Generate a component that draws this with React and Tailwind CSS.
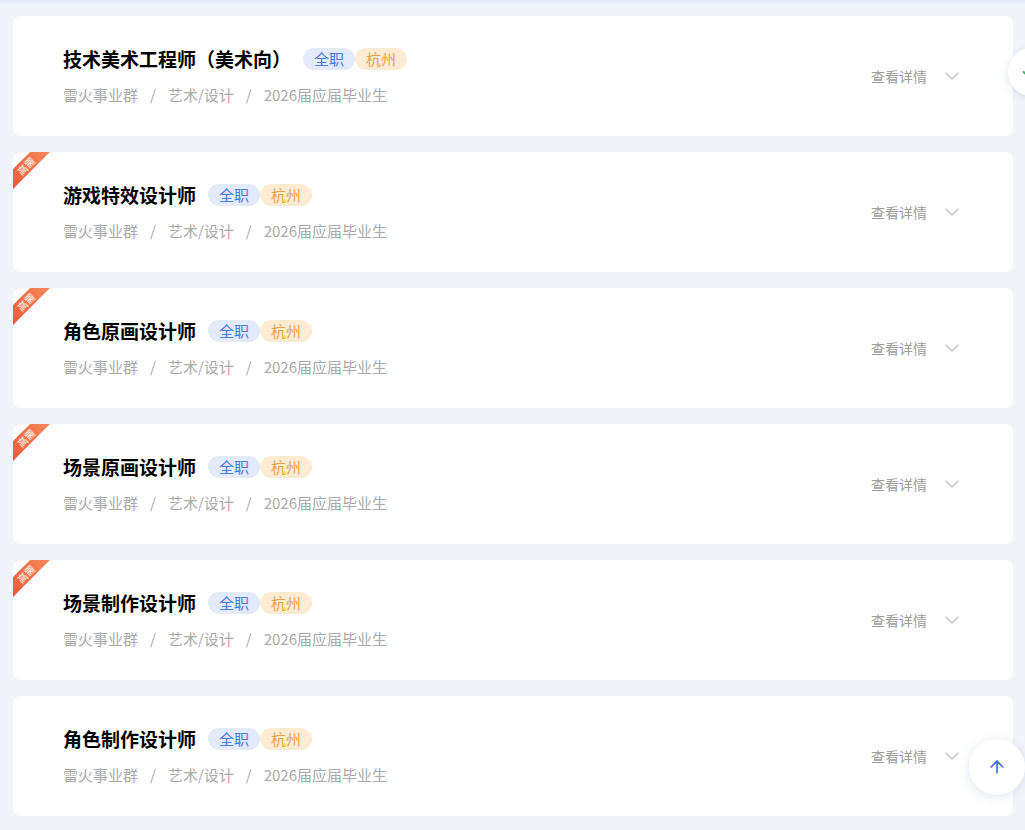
import React from "react";
import { ChevronDown, ArrowUp, Check } from "lucide-react";

const jobs = [
  { title: "技术美术工程师（美术向）", hot: false },
  { title: "游戏特效设计师", hot: true },
  { title: "角色原画设计师", hot: true },
  { title: "场景原画设计师", hot: true },
  { title: "场景制作设计师", hot: true },
  { title: "角色制作设计师", hot: false },
];

function JobCard({ job }) {
  return (
    <div className="relative flex h-[120px] items-center justify-between rounded-lg bg-white pl-[50px] pr-[49px]">
      {/* 高需 角标 */}
      {job.hot && (
        <div className="absolute left-0 top-0 h-[40px] w-[40px] overflow-hidden rounded-tl-lg">
          <div className="absolute left-[-17px] top-[7px] flex h-[14px] w-[60px] -rotate-45 items-center justify-center bg-gradient-to-r from-[#ee5530] to-[#f58a5c] text-[10px] leading-none text-white">
            高需
          </div>
        </div>
      )}

      <div className="flex flex-col">
        <div className="flex items-center">
          <h3 className="text-[19px] font-bold leading-[26px] text-black">
            {job.title}
          </h3>
          <div className="ml-3 flex items-center">
            <span className="rounded-full bg-[#e2eafc] px-[11px] text-[15px] leading-[22px] text-[#4a7be0]">
              全职
            </span>
            <span className="rounded-full bg-[#fdebd4] px-[11px] text-[15px] leading-[22px] text-[#f0a04c]">
              杭州
            </span>
          </div>
        </div>
        <div className="mt-[12px] flex items-center text-[15px] leading-[22px] text-[#aaaaaa]">
          <span>雷火事业群</span>
          <span className="mx-[12px]">/</span>
          <span>艺术/设计</span>
          <span className="mx-[12px]">/</span>
          <span>2026届应届毕业生</span>
        </div>
      </div>

      <button className="flex items-center gap-[13px] text-[14px] text-[#9c9c9c]">
        <span>查看详情</span>
        <ChevronDown className="h-6 w-6 text-[#bbbbbb]" strokeWidth={1.1} />
      </button>
    </div>
  );
}

export default function App() {
  return (
    <div
      className="relative min-h-[830px] overflow-hidden bg-[#f1f4f9] px-[13px] pt-4 pb-4"
      style={{ fontFamily: '"Noto Sans CJK SC", "Noto Sans", sans-serif' }}
    >
      <div className="pointer-events-none absolute left-0 right-0 top-0 h-[6px] bg-gradient-to-b from-[#e4e9f5] to-transparent" />

      <div className="flex w-[1000px] flex-col gap-4">
        {jobs.map((job) => (
          <JobCard key={job.title} job={job} />
        ))}
      </div>

      {/* 右侧悬浮按钮（部分露出） */}
      <div className="absolute left-[1008px] top-[48px] flex h-[48px] w-[48px] items-center justify-start rounded-full bg-white pl-[13px] shadow-[0_2px_10px_rgba(60,90,150,0.15)]">
        <Check className="h-4 w-4 text-[#3cb371]" strokeWidth={3} />
      </div>

      {/* 返回顶部 */}
      <div className="absolute left-[969px] top-[739px] flex h-[56px] w-[56px] items-center justify-center rounded-full bg-white shadow-[0_2px_12px_rgba(60,90,150,0.15)]">
        <ArrowUp className="h-5 w-5 text-[#3a6fd8]" strokeWidth={2} />
      </div>
    </div>
  );
}
